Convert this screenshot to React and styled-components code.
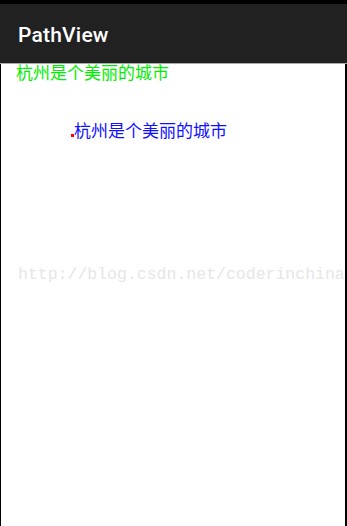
import React from "react";
import styled, { createGlobalStyle } from "styled-components";

const Global = createGlobalStyle`
  html, body { margin: 0; padding: 0; background: #ffffff; }
  body { width: 347px; height: 526px; overflow: hidden; }
`;

const Screen = styled.div`
  width: 347px;
  height: 526px;
  display: flex;
  flex-direction: column;
  background: #000;
`;

const StatusBar = styled.div`
  height: 4px;
  background: #000;
  flex-shrink: 0;
`;

const AppBar = styled.header`
  height: 59px;
  background: #212121;
  border-bottom: 1px solid #a8a8a8;
  display: flex;
  align-items: center;
  padding-left: 18px;
  flex-shrink: 0;
`;

const Title = styled.h1`
  margin: 0;
  padding-top: 2px;
  font-family: Roboto, "Liberation Sans", sans-serif;
  font-weight: 500;
  font-size: 21px;
  color: #ffffff;
  letter-spacing: 0.2px;
`;

const Canvas = styled.main`
  flex: 1;
  background: #fff;
  margin-left: 1px;
  margin-right: 2px;
  display: flex;
  flex-direction: column;
  font-family: "Noto Sans CJK SC", sans-serif;
`;

const Label = styled.div`
  font-size: 17px;
  line-height: 17px;
  color: ${(p) => p.$color};
  margin-left: ${(p) => p.$left}px;
  margin-top: ${(p) => p.$top}px;
  position: relative;
  white-space: nowrap;
`;

const Dot = styled.span`
  position: absolute;
  left: -3px;
  bottom: 1px;
  width: 3px;
  height: 3px;
  background: #ff0000;
`;

const Watermark = styled.div`
  margin-top: 127px;
  margin-left: 17px;
  font-family: "Liberation Mono", "DejaVu Sans Mono", monospace;
  font-size: 16.5px;
  color: #e6e6e6;
  white-space: nowrap;
  overflow: hidden;
`;

export default function App() {
  return (
    <>
      <Global />
      <Screen>
        <StatusBar />
        <AppBar>
          <Title>PathView</Title>
        </AppBar>
        <Canvas>
          <Label $color="#00ee00" $left={15} $top={-1}>杭州是个美丽的城市</Label>
          <Label $color="#1010ff" $left={73} $top={41}>
            <Dot />
            杭州是个美丽的城市
          </Label>
          <Watermark>http://blog.csdn.net/coderinchina</Watermark>
        </Canvas>
      </Screen>
    </>
  );
}
